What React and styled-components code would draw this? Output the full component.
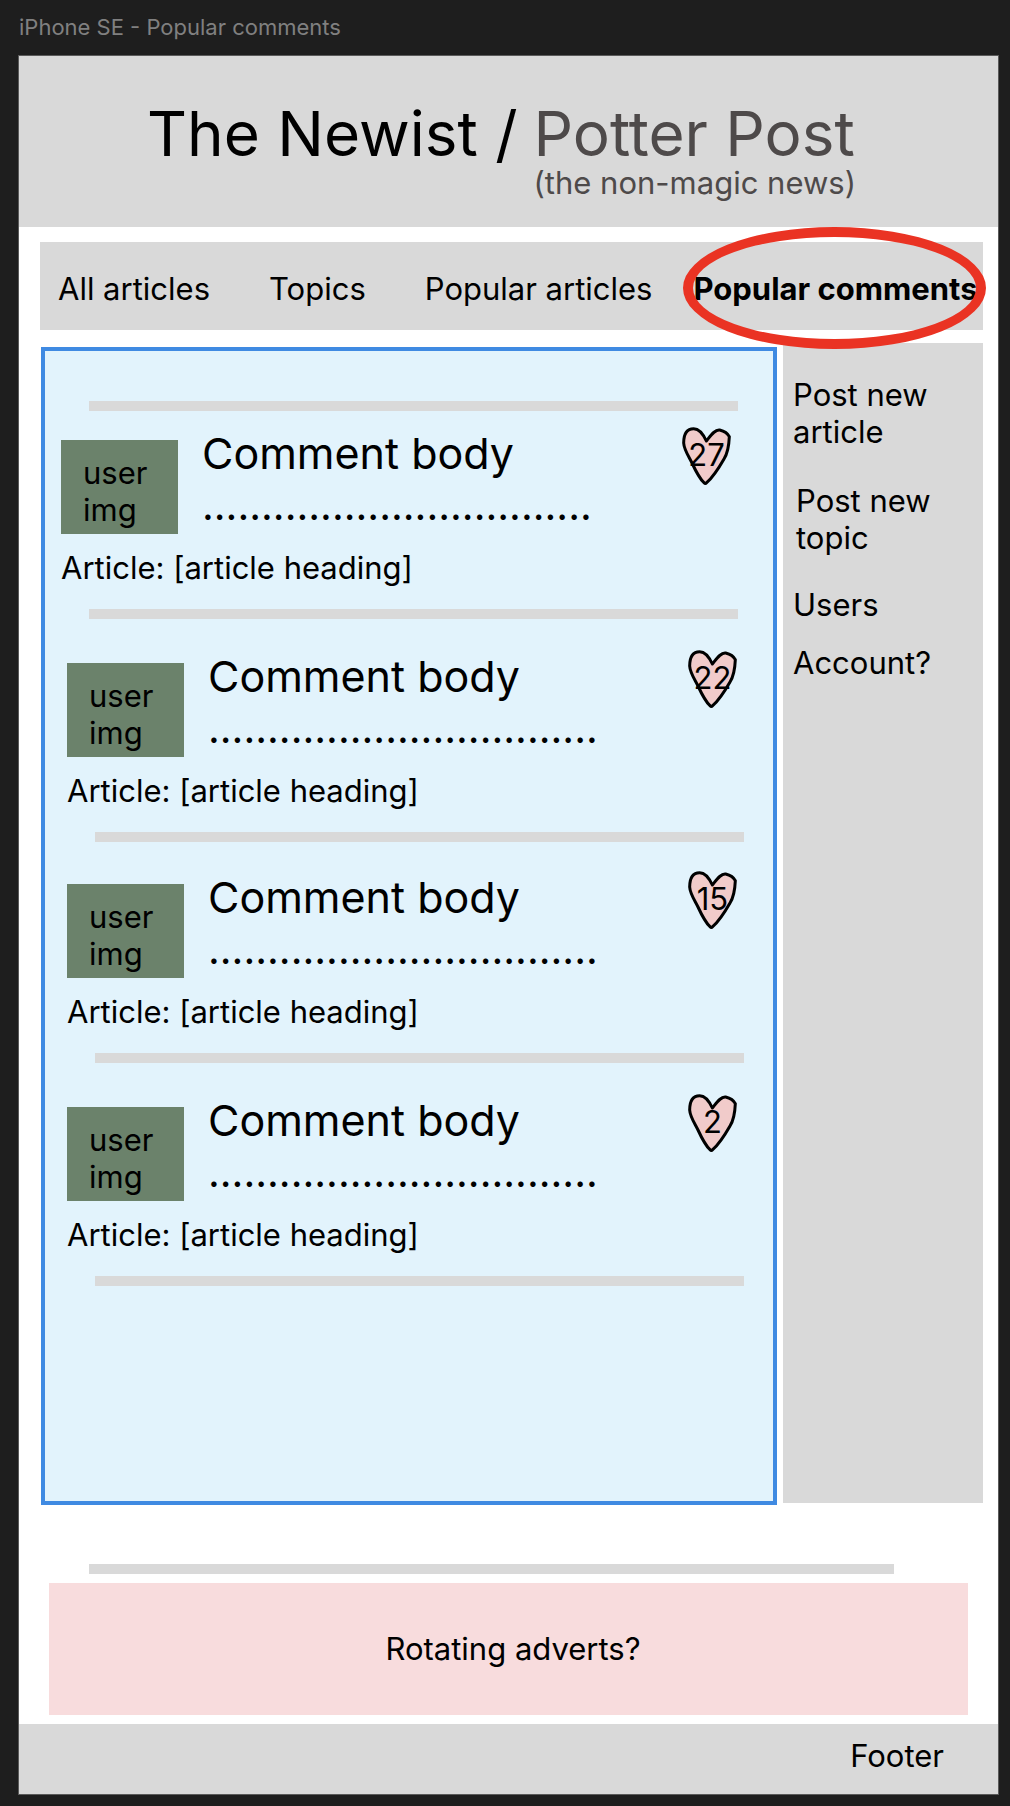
import React from 'react';
import styled, { createGlobalStyle } from 'styled-components';

const GlobalStyle = createGlobalStyle`
  * { box-sizing: border-box; }
  body {
    margin: 0;
    background: #1e1e1e;
    color: #000;
    font-family: Inter, "Liberation Sans", sans-serif;
    font-size: 31px;
    line-height: 37px;
  }
`;

const Canvas = styled.div`
  padding: 14px 12px 12px 19px;
`;

const FrameLabel = styled.div`
  color: #808080;
  font-size: 22px;
  line-height: 26px;
  margin-bottom: 16px;
`;

const Frame = styled.div`
  background: #fff;
  box-shadow: 0 0 0 1px #5a5a5a;
`;

const Header = styled.header`
  display: flex;
  justify-content: center;
  column-gap: 16px;
  padding: 48px 14px 26px 0;
  background: #d9d9d9;
`;

const Title = styled.h1`
  margin: 0;
  font-size: 62px;
  font-weight: 400;
  line-height: 60px;
`;

const Brand = styled.div`
  color: #4e4a4a;
`;

const Tagline = styled.p`
  margin: 0;
`;

const Nav = styled.nav`
  display: flex;
  column-gap: 59px;
  margin: 15px 15px 0 21px;
  padding: 28px 0 23px 18px;
  background: #d9d9d9;
`;

const NavLink = styled.a`
  position: relative;
  color: inherit;
  text-decoration: none;
  white-space: nowrap;
  font-weight: ${(p) => (p.$active ? 700 : 400)};
  margin-left: ${(p) => (p.$active ? '-18px' : 0)};

  &::after {
    content: '';
    display: ${(p) => (p.$active ? 'block' : 'none')};
    position: absolute;
    inset: -43px -8px -42px -10px;
    border: 10px solid #ea3323;
    border-radius: 50%;
    pointer-events: none;
  }
`;

const Columns = styled.div`
  display: grid;
  grid-template-columns: minmax(0, 1fr) 200px;
  column-gap: 6px;
  margin: 13px 15px 0 22px;
`;

const Feed = styled.main`
  margin-top: 4px;
  padding: 50px 0 215px 16px;
  border: 4px solid #3f8ae2;
  background: #e2f3fc;
`;

const Rule = styled.hr`
  height: 10px;
  margin: 0 35px 0 28px;
  border: 0;
  background: #d9d9d9;
`;

const Comment = styled.article`
  display: grid;
  grid-template-columns: 117px minmax(0, 1fr) 49px;
  column-gap: 24px;
  margin: 0 ${(p) => 42 - p.$indent}px 0 ${(p) => p.$indent}px;
  padding: ${(p) => p.$space}px 0 38px;
`;

const FeedRule = styled(Rule)`
  margin: 0 ${(p) => 35 - p.$indent}px 0 ${(p) => 28 + p.$indent}px;
`;

const Avatar = styled.div`
  height: 94px;
  padding: 14px 22px;
  background: #6b826b;
`;

const CommentBody = styled.div`
  margin-top: -13px;
  font-size: 43px;
  line-height: 52px;
  white-space: nowrap;
`;

const Dots = styled.div`
  font-size: 41px;
`;

const Article = styled.p`
  grid-column: 1 / -1;
  margin: 15px 0 -15px;
`;

const Likes = styled.button`
  display: grid;
  width: 49px;
  height: 58px;
  margin-top: -13px;
  padding: 0;
  border: 0;
  background: none;
  color: inherit;
  font: inherit;
  place-items: center;
  > * { grid-area: 1 / 1; }
`;

const Count = styled.span`
  padding-bottom: 4px;
`;

const Sidebar = styled.aside`
  padding: 33px 10px;
  margin-bottom: 2px;
  background: #d9d9d9;
`;

const SideLink = styled.a`
  display: block;
  margin: 0 0 ${(p) => p.$gap}px ${(p) => p.$indent}px;
  color: inherit;
  text-decoration: none;
`;

const AdRule = styled(Rule)`
  margin: 59px 104px 9px 70px;
`;

const Advert = styled.section`
  display: flex;
  justify-content: center;
  margin: 0 30px 9px;
  padding: 47px 0 48px 9px;
  background: #f8dcdd;
`;

const Footer = styled.footer`
  padding: 13px 54px 20px;
  background: #d9d9d9;
  text-align: right;
`;

const comments = [
  { likes: 27, indent: 0, space: 29 },
  { likes: 22, indent: 6, space: 44 },
  { likes: 15, indent: 6, space: 42 },
  { likes: 2, indent: 6, space: 44 },
];

const sideLinks = [
  { text: 'Post new article', gap: 32, indent: 0 },
  { text: 'Post new topic', gap: 30, indent: 3 },
  { text: 'Users', gap: 21, indent: 0 },
  { text: 'Account?', gap: 0, indent: 0 },
];

function Heart() {
  return (
    <svg width="49" height="58" viewBox="0 0 147 174" aria-hidden="true">
      <path
        d="M73 42 C64 22 52 5 35 5 C15 5 5 20 5 48 C6 68 20 88 30 108 C42 134 54 156 66 167 Q70 171 74 167 C90 153 110 124 126 96 C139 76 141 52 142 29 C137 19 125 12 113 9 C98 7 86 26 73 42 Z"
        fill="#f1cbca"
        stroke="#000"
        strokeWidth="9"
        strokeLinejoin="round"
      />
    </svg>
  );
}

export default function App() {
  return (
    <>
      <GlobalStyle />
      <Canvas>
        <FrameLabel>iPhone SE - Popular comments</FrameLabel>
        <Frame>
          <Header>
            <Title>The Newist /</Title>
            <Brand>
              <Title as="div">Potter Post</Title>
              <Tagline>(the non-magic news)</Tagline>
            </Brand>
          </Header>
          <Nav>
            <NavLink href="#articles">All articles</NavLink>
            <NavLink href="#topics">Topics</NavLink>
            <NavLink href="#popular-articles">Popular articles</NavLink>
            <NavLink href="#popular-comments" $active aria-current="page">
              Popular comments
            </NavLink>
          </Nav>
          <Columns>
            <Feed>
              <FeedRule $indent={0} />
              {comments.map((c) => (
                <React.Fragment key={c.likes}>
                  <Comment $indent={c.indent} $space={c.space}>
                    <Avatar>user img</Avatar>
                    <CommentBody>
                      Comment body
                      <Dots>.................................</Dots>
                    </CommentBody>
                    <Likes type="button">
                      <Heart />
                      <Count>{c.likes}</Count>
                    </Likes>
                    <Article>Article: [article heading]</Article>
                  </Comment>
                  <FeedRule $indent={c.indent} />
                </React.Fragment>
              ))}
            </Feed>
            <Sidebar>
              {sideLinks.map((l) => (
                <SideLink key={l.text} href="#" $gap={l.gap} $indent={l.indent}>
                  {l.text}
                </SideLink>
              ))}
            </Sidebar>
          </Columns>
          <AdRule />
          <Advert>Rotating adverts?</Advert>
          <Footer>Footer</Footer>
        </Frame>
      </Canvas>
    </>
  );
}
